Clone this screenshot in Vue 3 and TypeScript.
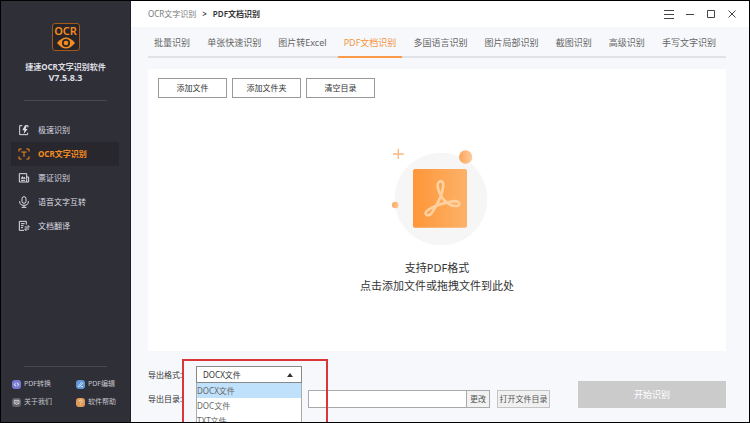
<script setup lang="ts">
import { ref } from 'vue'

interface NavItem { id: string; label: string }

const navItems: NavItem[] = [
  { id: 'fast', label: '极速识别' },
  { id: 'ocr', label: 'OCR文字识别' },
  { id: 'ticket', label: '票证识别' },
  { id: 'voice', label: '语音文字互转' },
  { id: 'translate', label: '文档翻译' },
]
const tools: NavItem[] = [
  { id: 'convert', label: 'PDF转换' },
  { id: 'edit', label: 'PDF编辑' },
  { id: 'about', label: '关于我们' },
  { id: 'help', label: '软件帮助' },
]
const tabs: string[] = [
  '批量识别', '单张快速识别', '图片转Excel', 'PDF文档识别', '多国语言识别',
  '图片局部识别', '截图识别', '高级识别', '手写文字识别',
]
const formats: string[] = ['DOCX文件', 'DOC文件', 'TXT文件']

const activeNav = ref<string>('ocr')
const activeTab = ref<string>('PDF文档识别')
const format = ref<string>('DOCX文件')
const folder = ref<string>('')
const listOpen = ref<boolean>(true)

function choose(name: string): void {
  format.value = name
  listOpen.value = false
}
</script>

<template>
  <div class="window">
    <aside class="sidebar">
      <div class="brand">
        <div class="logo">
          <span>OCR</span>
          <svg viewBox="0 0 54 36" aria-hidden="true">
            <path d="M0 18Q27-15 54 18Q27 51 0 18Z" fill="#f68b1f" />
            <circle cx="27" cy="18" r="12" fill="#25252b" />
            <circle cx="27" cy="18" r="7" fill="#f68b1f" />
          </svg>
        </div>
        <h1>捷速OCR文字识别软件</h1>
        <p>V7.5.8.3</p>
      </div>
      <nav class="nav">
        <button
          v-for="item in navItems" :key="item.id" type="button"
          :class="{ active: item.id === activeNav }" @click="activeNav = item.id"
        >
          <svg viewBox="0 0 36 36" aria-hidden="true">
            <g v-if="item.id === 'fast'">
              <path d="M13 5H5v27h24v-6M25 5h5v5" />
              <path d="M21 4l-8 15h6l-2 11 12-15h-6l4-11z" fill="currentColor" stroke="none" />
            </g>
            <g v-else-if="item.id === 'ocr'">
              <path d="M3 11V3h8M25 3h8v8M33 25v8h-8M11 33H3v-8M10 12h16M18 12v15" />
            </g>
            <g v-else-if="item.id === 'ticket'">
              <path d="M4 5h22v25H4zM26 15h6v15h-6M9 25h12" />
              <path d="M8 20l5-8 4 5 3-3 3 6z" fill="currentColor" stroke="none" />
            </g>
            <g v-else-if="item.id === 'voice'">
              <rect x="12" y="2" width="12" height="20" rx="6" />
              <path d="M5 15v2a13 11 0 0 0 26 0v-2M18 28v6M11 34h14" />
            </g>
            <g v-else>
              <path d="M25 14V4H4v27h14M9 11h11M9 17h8M9 23h6M20 21h14l-4-5M33 27H20l5 6" />
            </g>
          </svg>
          <span>{{ item.label }}</span>
        </button>
      </nav>
      <div class="tools">
        <a v-for="tool in tools" :key="tool.id" href="#">
          <svg viewBox="0 0 27 27" :class="tool.id" aria-hidden="true">
            <rect width="27" height="27" rx="9" />
            <path v-if="tool.id === 'convert'" d="M11 8l-5 7h5v4M16 19l5-7h-5V8" />
            <path v-else-if="tool.id === 'edit'" d="M8 17l9-10 3 3-9 9-4 1zM14 20h7" />
            <path v-else-if="tool.id === 'about'" d="M7 7h14v10h-5l-2 3-2-3H7zM10 12h8" />
            <path v-else d="M9 10c1-6 10-5 9 0 0 3-4 3-4 6M14 19v2" />
          </svg>
          <span>{{ tool.label }}</span>
        </a>
      </div>
    </aside>

    <main class="main">
      <header class="titlebar">
        <div class="crumbs">
          <span>OCR文字识别</span><b>&gt;</b><b>PDF文档识别</b>
        </div>
        <div class="controls">
          <button type="button" aria-label="菜单"><svg viewBox="0 0 20 20"><path d="M0 3h20M0 11h20M0 19h20" /></svg></button>
          <button type="button" aria-label="最小化"><svg viewBox="0 0 20 20"><path d="M2 11h16" /></svg></button>
          <button type="button" aria-label="最大化"><svg viewBox="0 0 20 20"><path d="M3 3h14v14H3z" /></svg></button>
          <button type="button" aria-label="关闭"><svg viewBox="0 0 20 20"><path d="M3 3l14 14M17 3L3 17" /></svg></button>
        </div>
      </header>

      <div class="content">
        <div class="tabs" role="tablist">
          <button
            v-for="tab in tabs" :key="tab" type="button" role="tab"
            :aria-selected="tab === activeTab" :class="{ active: tab === activeTab }"
            @click="activeTab = tab"
          >{{ tab }}</button>
        </div>

        <section class="panel">
          <div class="actions">
            <button type="button">添加文件</button>
            <button type="button">添加文件夹</button>
            <button type="button">清空目录</button>
          </div>
          <div class="drop">
            <svg class="art" viewBox="0 0 360 330" aria-hidden="true">
              <defs>
                <linearGradient id="sheet" x1="0" y1="0" x2="1" y2="0">
                  <stop offset="0" stop-color="#fe9638" />
                  <stop offset="1" stop-color="#fdb269" />
                </linearGradient>
                <linearGradient id="ball" x1="0" y1="0" x2="1" y2="0">
                  <stop offset="0" stop-color="#fca65b" />
                  <stop offset="1" stop-color="#fdcb9c" />
                </linearGradient>
              </defs>
              <circle cx="183" cy="177" r="139" fill="#f6f6f6" />
              <path d="M55 26v31M39 42h32" stroke="#fbb880" stroke-width="4" />
              <circle cx="257" cy="51" r="20" fill="url(#ball)" />
              <circle cx="46" cy="195" r="10" fill="url(#ball)" />
              <rect x="99" y="87" width="162" height="176" rx="6" fill="url(#sheet)" />
              <path
                d="M174 145C168 120 192 116 190 138C187 162 171 195 158 215C144 235 127 222 144 210C164 196 195 188 219 184C245 180 245 203 218 197C195 190 178 166 174 145Z"
                fill="none" stroke="#ffd0a0" stroke-width="8" stroke-linejoin="round"
              />
            </svg>
            <p>支持PDF格式</p>
            <p>点击添加文件或拖拽文件到此处</p>
          </div>
        </section>

        <form class="export" @submit.prevent>
          <div class="fields">
            <div class="row">
              <label for="format">导出格式:</label>
              <div class="picker">
                <select id="format" v-model="format" @mousedown.prevent="listOpen = !listOpen">
                  <option v-for="name in formats" :key="name">{{ name }}</option>
                </select>
                <svg class="arrow" viewBox="0 0 6 4" aria-hidden="true"><path d="M3 0l3 4H0z" /></svg>
                <div v-if="listOpen" class="list">
                  <button
                    v-for="name in formats" :key="name" type="button"
                    :class="{ selected: name === format }" @click="choose(name)"
                  >{{ name }}</button>
                </div>
                <div v-if="listOpen" class="marker"></div>
              </div>
            </div>
            <div class="row">
              <label for="folder">导出目录:</label>
              <div class="folder">
                <input id="folder" v-model="folder" type="text">
                <button type="button">更改</button>
              </div>
              <button class="open" type="button">打开文件目录</button>
            </div>
          </div>
          <button class="start" type="submit" disabled>开始识别</button>
        </form>
      </div>
    </main>
  </div>
</template>

<style>
body { background: #000; }
</style>

<style scoped>
* { box-sizing: border-box; }
.window {
  display: flex;
  height: 100vh;
  overflow: hidden;
  border: 1px solid #000;
  background: #f6f8fb;
  color: #333;
  font: 8px/12px "Noto Sans", "Noto Sans CJK SC", sans-serif;
}
button, input, select { margin: 0; padding: 0; font: inherit; color: inherit; border-radius: 0; }
button { border: 0; background: none; cursor: pointer; white-space: nowrap; }
h1, p { margin: 0; }

.sidebar {
  flex: 0 0 130px;
  display: flex;
  flex-direction: column;
  padding-bottom: 14px;
  border-right: 1px solid #1f1f26;
  background: #2f2f38;
  color: #dedee2;
}
.brand {
  margin: 22px 23px 0;
  padding-bottom: 17px;
  border-bottom: 1px solid #494951;
  display: flex;
  flex-direction: column;
  align-items: center;
}
.logo {
  width: 28px;
  height: 28px;
  margin-bottom: 10px;
  display: flex;
  flex-direction: column;
  align-items: center;
  border: 1px solid #a45916;
  border-radius: 3px;
  background: #25252b;
  color: #f68b1f;
  font: 11px/13px "Noto Sans", sans-serif;
  font-weight: 600;
}
.logo svg { width: 18px; height: 12px; }
h1, .brand p { font-size: 8px; line-height: 11px; font-weight: 700; white-space: nowrap; }
.brand p { font-size: 9px; }
.nav { display: flex; flex-direction: column; margin: 17px 11px 0 10px; }
.nav button { display: flex; align-items: center; gap: 8px; height: 24px; padding-left: 7px; }
.nav .active { background: #27272d; color: #f68b1f; font-weight: 700; }
.nav svg { width: 12px; height: 12px; fill: none; stroke: currentColor; stroke-width: 3; }
.tools {
  display: grid;
  grid-template-columns: 1fr 1fr;
  column-gap: 13px;
  row-gap: 6px;
  margin: auto 3px 0 11px;
  padding-top: 12px;
  position: relative;
}
.tools::before { content: ""; position: absolute; top: 0; left: 12px; right: 20px; border-top: 1px solid #494951; }
.tools a { display: flex; align-items: center; gap: 3px; color: #c4c4c8; text-decoration: none; font-size: 7px; white-space: nowrap; }
.tools svg { width: 9px; height: 9px; fill: none; stroke: #fff; stroke-width: 2; }
.tools rect { stroke: none; }
.convert rect { fill: #7779d4; }
.edit rect { fill: #6298d8; }
.about rect { fill: #63636c; }
.help rect { fill: #df9b5a; }

.main { flex: 1; min-width: 0; display: flex; flex-direction: column; }
.titlebar {
  flex: 0 0 26px;
  display: flex;
  align-items: center;
  justify-content: space-between;
  padding: 0 12px 0 17px;
  background: #fff;
}
.crumbs { display: flex; gap: 6px; color: #777; }
.crumbs b { color: #333; font-weight: 600; }
.controls { display: flex; gap: 11px; }
.controls button { width: 10px; height: 10px; display: flex; }
.controls svg { width: 10px; height: 10px; fill: none; stroke: #444; stroke-width: 2; }

.content { flex: 1; min-height: 0; display: flex; flex-direction: column; padding: 0 23px 14px 17px; }
.tabs {
  flex: 0 0 31px;
  display: flex;
  justify-content: space-between;
  padding: 0 4px 0 0;
  border-bottom: 2px solid #dfe3e6;
}
.tabs button { margin-bottom: -2px; padding: 2px 6px 0; border-bottom: 2px solid transparent; font-size: 9px; color: #666; }
.tabs .active { color: #f5953c; border-color: #fa9a4b; }

.panel { flex: 1; min-height: 0; margin-top: 11px; padding: 9px 10px; display: flex; flex-direction: column; background: #fff; }
.actions { display: flex; gap: 5px; }
.actions button { width: 69px; height: 20px; border: 1px solid #999; background: #fff; }
.drop { flex: 1; display: flex; flex-direction: column; align-items: center; padding-top: 42px; font-size: 11px; line-height: 18px; }
.art { width: 120px; height: 110px; margin: 0 0 9px 6px; }

.export { display: flex; justify-content: space-between; align-items: flex-end; padding-top: 15px; }
.fields { display: flex; flex-direction: column; gap: 7px; flex: 0 1 402px; }
.row { display: flex; align-items: center; }
.row label { flex: 0 0 48px; }
.picker { position: relative; flex: 0 0 106px; height: 17px; }
.picker select {
  appearance: none;
  display: block;
  width: 100%;
  height: 17px;
  padding: 0 6px;
  border: 1px solid #888;
  background: #fff;
}
.arrow { position: absolute; right: 9px; top: 7px; width: 6px; height: 4px; fill: #333; }
.list {
  position: absolute;
  z-index: 2;
  top: 17px;
  left: 0;
  right: 0;
  border: 1px solid #aaa;
  border-top: 0;
  background: #fff;
}
.list button { display: block; width: 100%; height: 15px; text-align: left; color: #666; }
.list .selected { background: #bfe1fc; }
.marker { position: absolute; z-index: 3; top: -7px; left: -14px; width: 146px; height: 80px; border: 2px solid #d9363a; pointer-events: none; }
.folder { flex: 1; display: flex; height: 18px; margin: 0 7px 0 112px; border: 1px solid #aaa; }
.folder input { flex: 1; min-width: 0; border: 0; background: #fff; }
.folder button { flex: 0 0 23px; border-left: 1px solid #aaa; background: #f2f2f2; color: #555; }
.open { flex: 0 0 53px; height: 18px; border: 1px solid #c4c4c4; background: #f0f0f0; color: #555; }
.start { flex: 0 0 148px; height: 27px; background: #cbcbcb; color: #fff; font-size: 9px; }
</style>
